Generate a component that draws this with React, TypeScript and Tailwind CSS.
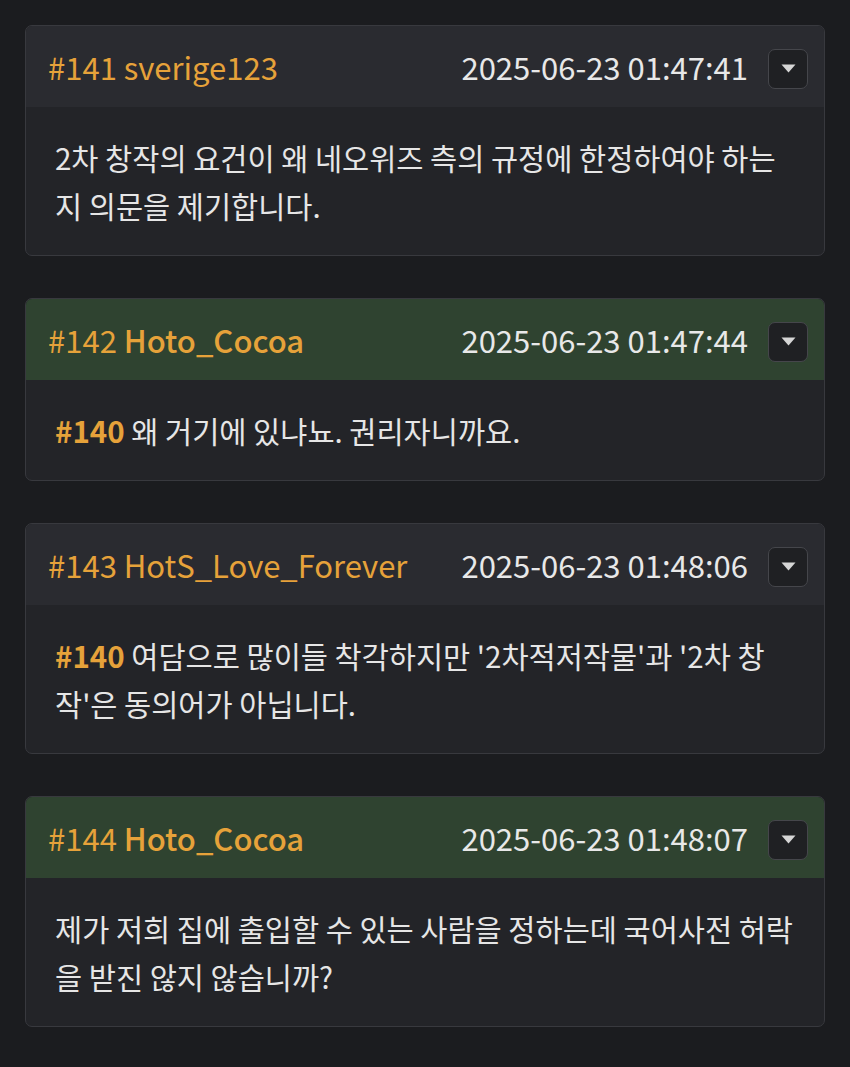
type Post = {
  no: number;
  author: string;
  registered?: boolean;
  time: string;
  reply?: number;
  text: string;
};

const posts: Post[] = [
  {
    no: 141,
    author: "sverige123",
    time: "2025-06-23 01:47:41",
    text: "2차 창작의 요건이 왜 네오위즈 측의 규정에 한정하여야 하는지 의문을 제기합니다.",
  },
  {
    no: 142,
    author: "Hoto_Cocoa",
    registered: true,
    time: "2025-06-23 01:47:44",
    reply: 140,
    text: "왜 거기에 있냐뇨. 권리자니까요.",
  },
  {
    no: 143,
    author: "HotS_Love_Forever",
    time: "2025-06-23 01:48:06",
    reply: 140,
    text: "여담으로 많이들 착각하지만 '2차적저작물'과 '2차 창작'은 동의어가 아닙니다.",
  },
  {
    no: 144,
    author: "Hoto_Cocoa",
    registered: true,
    time: "2025-06-23 01:48:07",
    text: "제가 저희 집에 출입할 수 있는 사람을 정하는데 국어사전 허락을 받진 않지 않습니까?",
  },
  {
    no: 145,
    author: "sverige123",
    time: "2025-06-23 01:48:15",
    text: "...",
  },
];

function Comment({ post }: { post: Post }) {
  return (
    <div className="overflow-hidden rounded-[7px] border border-[#38393e] bg-[#232428]">
      <div
        className={`flex h-[81px] items-center justify-between pl-[22px] pr-[16px] ${
          post.registered ? "bg-[#2f4330]" : "bg-[#2a2b30]"
        }`}
      >
        <span className="text-[31px] leading-none text-[#e6a23a]">
          #{post.no}{" "}
          <span className={post.registered ? "font-medium" : ""}>{post.author}</span>
        </span>
        <div className="flex items-center gap-[20px]">
          <span className="text-[31px] leading-none text-[#e8e8e8]">{post.time}</span>
          <button className="mt-[4px] flex h-[40px] w-[40px] items-center justify-center rounded-[7px] border border-[#45464b] bg-[#1f2023]">
            <svg width="15" height="9" viewBox="0 0 15 9">
              <path d="M0.5 0.5h14L7.5 8.5z" fill="#d6d6d6" />
            </svg>
          </button>
        </div>
      </div>
      <div className="px-[29px] py-[26px] text-[29.5px] leading-[48px] text-[#e6e6e6]">
        {post.reply && (
          <span className="font-bold text-[#e6a23a]">#{post.reply} </span>
        )}
        {post.text}
      </div>
    </div>
  );
}

export default function App() {
  return (
    <div
      className="min-h-screen bg-[#1b1c1f] px-[25px] pt-[25px] pb-[40px]"
      style={{ fontFamily: '"Noto Sans CJK KR", "Noto Sans", sans-serif' }}
    >
      <div className="flex flex-col gap-[42px]">
        {posts.map((p) => (
          <Comment key={p.no} post={p} />
        ))}
      </div>
    </div>
  );
}
